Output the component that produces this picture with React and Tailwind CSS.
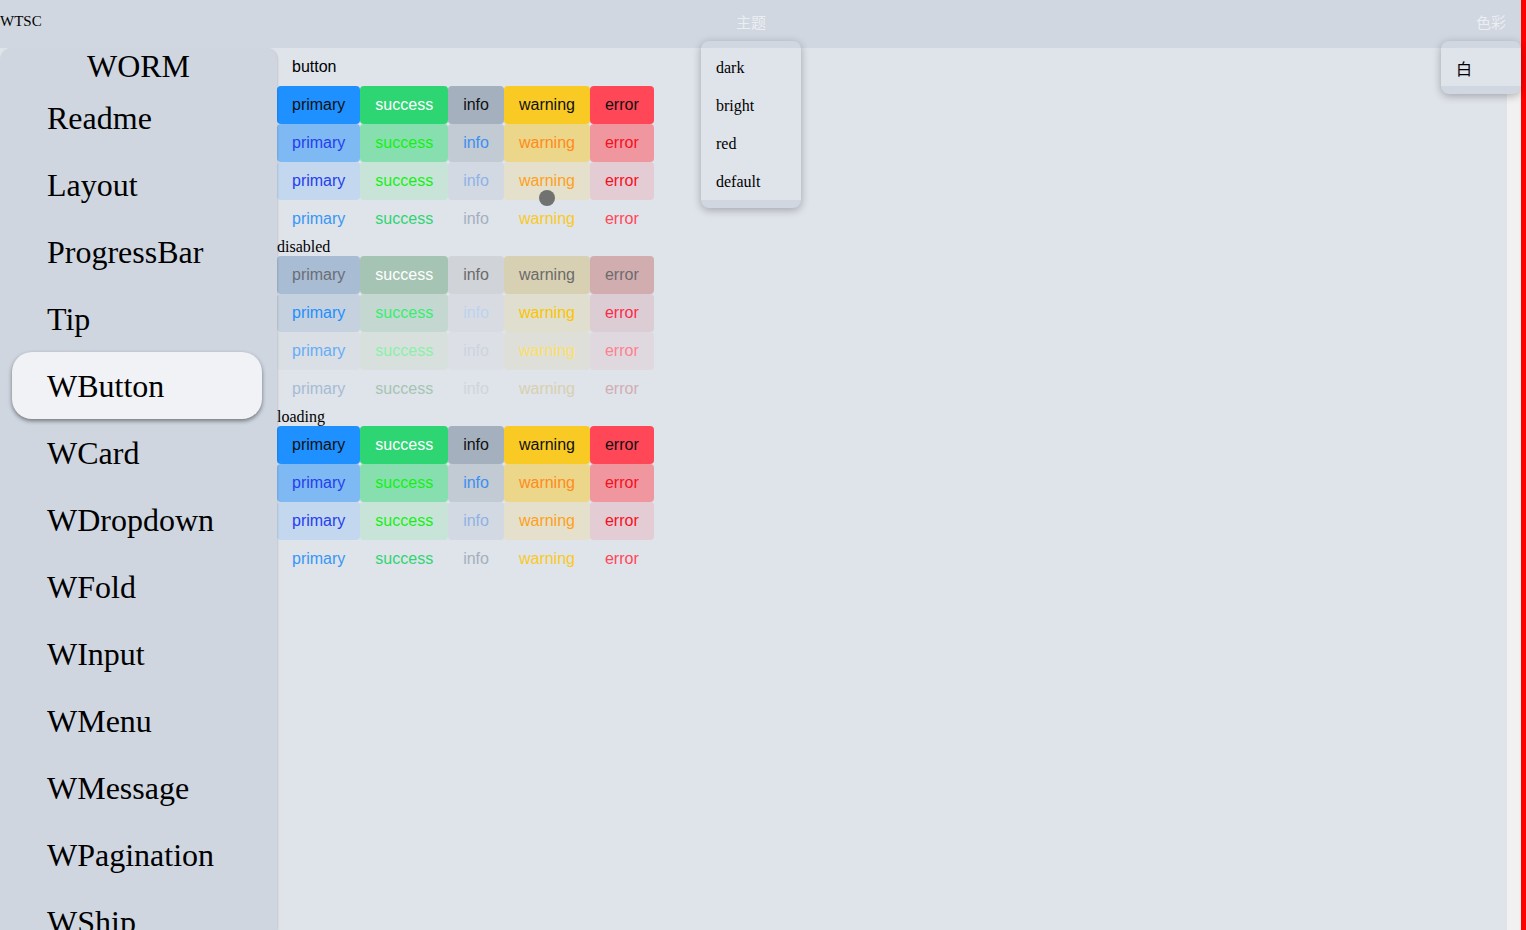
import React from "react";

const names = ["primary", "success", "info", "warning", "error"];

const normalRows = [
  ["bg-[#1e90ff] text-[#111]", "bg-[#2ed573] text-white", "bg-[#a4b0be] text-[#111]", "bg-[#f9ca24] text-[#111]", "bg-[#ff4757] text-[#111]"],
  ["bg-[#7eb9f4] text-[#2540ee]", "bg-[#87dfb0] text-[#14f014]", "bg-[#c2cad4] text-[#3d8ff0]", "bg-[#ecd68a] text-[#ff8c1a]", "bg-[#ef969e] text-[#f5101e]"],
  ["bg-[#c3d7ee] text-[#2540ee]", "bg-[#c8e4d9] text-[#14f014]", "bg-[#d3d9e2] text-[#8fb2e6]", "bg-[#e4e0cc] text-[#ffa01a]", "bg-[#e3ccd4] text-[#f5101e]"],
  ["text-[#3797f5]", "text-[#2ed573]", "text-[#a4b0be]", "text-[#f9ca24]", "text-[#ff4757]"],
];

const disabledRows = [
  ["bg-[#a8bcd3] text-[#6b6e75]", "bg-[#a6c4b3] text-white", "bg-[#d0d3d7] text-[#6b6b6b]", "bg-[#d8d0b2] text-[#6b6b6b]", "bg-[#d2adb0] text-[#6b6b6b]"],
  ["bg-[#c5d1de] text-[#1e90ff]", "bg-[#c5d7d1] text-[#33f070]", "bg-[#d8dce2] text-[#bcd3ee]", "bg-[#e0dfcf] text-[#fbc400]", "bg-[#dccdd4] text-[#ff2a4a]"],
  ["bg-[#dadfe6] text-[#66adf7]", "bg-[#d8e0de] text-[#8af0a8]", "bg-[#dce0e6] text-[#ccd4de]", "bg-[#dfdfda] text-[#fbe06a]", "bg-[#dfd9df] text-[#ff8090]"],
  ["text-[#a6bcd4]", "text-[#a5c5b3]", "text-[#d1d5da]", "text-[#d8d0b0]", "text-[#d2adb2]"],
];

const menu = ["Readme", "Layout", "ProgressBar", "Tip", "WButton", "WCard", "WDropdown", "WFold", "WInput", "WMenu", "WMessage", "WPagination", "WShip"];

const serif = "font-['Liberation_Serif',serif]";
const sans = "font-['Liberation_Sans',Arial,sans-serif]";

function ButtonRows({ rows }) {
  return (
    <div className="flex flex-col">
      {rows.map((row, ri) => (
        <div key={ri} className="flex">
          {row.map((cls, ci) => (
            <div
              key={ci}
              className={`flex h-[38px] items-center rounded-[4px] px-[15px] text-[16px] ${sans} ${cls}`}
            >
              {names[ci]}
            </div>
          ))}
        </div>
      ))}
    </div>
  );
}

function Dropdown({ items, pl }) {
  return (
    <div className="rounded-lg bg-[#d0d7e0] pb-[8px] pt-[7px] shadow-[0_2px_8px_rgba(0,0,0,0.28)]">
      <div className="flex flex-col bg-[#dfe3ea]">
        {items.map((it) => (
          <div key={it} className={`flex h-[38px] items-center ${pl} pt-[1px] text-[16px] text-black ${serif}`}>
            {it}
          </div>
        ))}
      </div>
    </div>
  );
}

export default function App() {
  return (
    <div className="flex h-[930px] w-[1526px] overflow-hidden bg-[#dfe3ea]">
      <div className="flex min-w-0 flex-1 flex-col">
        {/* header */}
        <div className="relative z-20 flex h-12 shrink-0 bg-[#d0d7e0]">
          <div className={`w-[701px] pt-[13px] text-[15px] leading-[17px] text-black ${serif}`}>WTSC</div>
          <div className="relative w-[100px]">
            <div className="pt-[13px] text-center text-[15px] leading-[17px] text-white/60 font-['Noto_Sans_CJK_SC',sans-serif]">主题</div>
            <div className="absolute left-0 top-[41px] w-[100px]">
              <Dropdown items={["dark", "bright", "red", "default"]} pl="pl-[15px]" />
            </div>
          </div>
          <div className="flex-1" />
          <div className="relative w-[80px]">
            <div className="pr-[15px] pt-[13px] text-right text-[15px] leading-[17px] text-white/60 font-['Noto_Sans_CJK_SC',sans-serif]">色彩</div>
            <div className="absolute left-0 top-[41px] w-[80px]">
              <Dropdown items={["白"]} pl="pl-[15px] font-['Noto_Sans_CJK_SC',sans-serif]" />
            </div>
          </div>
        </div>

        <div className="flex min-h-0 flex-1">
          {/* sidebar */}
          <div className="relative z-10 flex w-[277px] shrink-0 flex-col overflow-hidden rounded-t-xl bg-[#cfd6e0] shadow-[1px_0_2px_rgba(0,0,0,0.12)]">
            <div className={`h-[36px] shrink-0 text-center text-[32px] leading-[37px] text-black ${serif}`}>WORM</div>
            {menu.map((m) => (
              <div
                key={m}
                className={`mx-3 flex h-[67px] w-[250px] shrink-0 items-center pl-[35px] text-[32px] text-black ${serif} ${
                  m === "WButton" ? "rounded-[20px] bg-[#f0f2f6] shadow-[0_2px_4px_rgba(0,0,0,0.45)]" : ""
                }`}
              >
                {m}
              </div>
            ))}
          </div>

          {/* main */}
          <div className="relative flex min-w-0 flex-1 flex-col bg-[#dfe3ea]">
            <div className={`flex h-[38px] items-center px-[15px] text-[16px] text-black ${sans}`}>button</div>
            <ButtonRows rows={normalRows} />
            <div className={`h-[18px] text-[16px] leading-[18px] text-black ${serif}`}>disabled</div>
            <ButtonRows rows={disabledRows} />
            <div className={`h-[18px] text-[16px] leading-[18px] text-black ${serif}`}>loading</div>
            <ButtonRows rows={normalRows} />
            <div className="absolute left-[262px] top-[142px] h-[16px] w-[16px] rounded-full bg-[#6a6a6a]/95" />
          </div>

          {/* scrollbar track */}
          <div className="w-[14px] shrink-0 bg-[#f1f1f1]" />
        </div>
      </div>
      <div className="w-[5px] shrink-0 bg-[#ff0000]" />
    </div>
  );
}
